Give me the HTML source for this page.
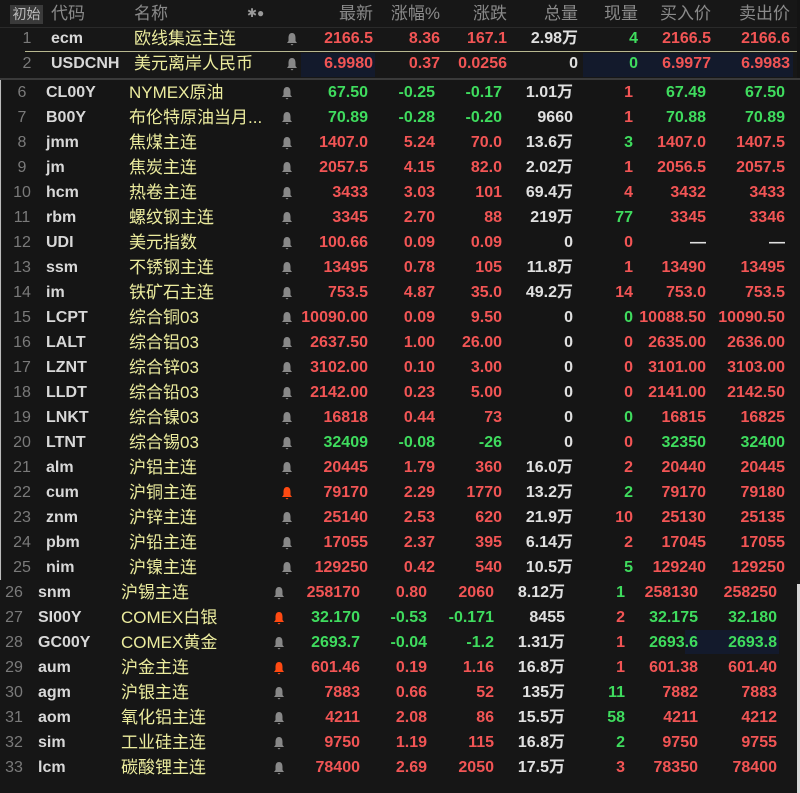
<!DOCTYPE html>
<html><head><meta charset="utf-8">
<style>
html,body{margin:0;padding:0;background:#1b1b1b;}
body{width:800px;height:793px;position:relative;overflow:hidden;font-family:"Liberation Sans","Noto Sans CJK SC",sans-serif;}
.sec{position:absolute;background:#161616;overflow:hidden;}
.r{position:absolute;left:0;width:800px;height:25px;line-height:25px;font-size:16px;font-weight:bold;white-space:nowrap;}
.r span{position:absolute;top:0;}
.r svg{position:absolute;}
.n{left:12px;width:30px;text-align:center;color:#7a7a7a;font-weight:normal;}
.c{left:51px;color:#d8d8d8;}
.m{left:134px;color:#ecec9e;font-weight:normal;font-size:17px;}
.b{left:286px;top:6px;width:12px;height:14px;}
.v1,.v2,.v3,.v4,.v5,.v6,.v7{width:90px;text-align:right;}
.v1{left:283px}.v2{left:350px}.v3{left:417px}.v4{left:488px;color:#e0e0e0}.v5{left:548px}.v6{left:621px}.v7{left:700px}
.R{color:#f25555}.G{color:#3fdc5e}.W{color:#e0e0e0}
.hd{position:absolute;top:0;left:0;width:800px;height:27px;line-height:27px;font-size:16px;color:#8a8a8a;}
.hd span{position:absolute;top:0;}
.hl{position:absolute;background:#131a2c;}
</style></head><body>
<svg width="0" height="0" style="position:absolute"><defs>
<symbol id="bell" viewBox="0 0 12 14"><path d="M6 1 C3 1 2.5 4 2.5 6 L2.5 9 L1 11 L11 11 L9.5 9 L9.5 6 C9.5 4 9 1 6 1 Z M4.5 12 L7.5 12 L6 13.5 Z"/></symbol></defs></svg>

<div class="sec" style="left:0;top:0;width:797px;height:78px;background:#171717;">
<div class="hd">
<span style="left:10px;top:5px;height:19px;line-height:19px;width:33px;background:#3a3a3a;color:#bbb;font-size:14px;text-align:center;">初始</span>
<span style="left:51px;font-size:17px">代码</span>
<span style="left:134px;font-size:17px">名称</span>
<span style="left:247px;font-size:12px;color:#999">✱●</span>
<span style="left:283px;width:90px;text-align:right;font-size:17px">最新</span>
<span style="left:350px;width:90px;text-align:right;font-size:17px">涨幅%</span>
<span style="left:417px;width:90px;text-align:right;font-size:17px">涨跌</span>
<span style="left:488px;width:90px;text-align:right;font-size:17px">总量</span>
<span style="left:548px;width:90px;text-align:right;font-size:17px">现量</span>
<span style="left:621px;width:90px;text-align:right;font-size:17px">买入价</span>
<span style="left:700px;width:90px;text-align:right;font-size:17px">卖出价</span>
</div>
<div style="position:absolute;left:0;top:27px;width:797px;height:1px;background:#2a2a2a"></div>
<div style="position:absolute;left:25px;top:51px;width:772px;height:1px;background:#b8b890"></div>
<div class="hl" style="left:301px;top:53px;width:74px;height:24px"></div>
<div class="hl" style="left:583px;top:53px;width:210px;height:24px"></div>
<div class="r" style="top:26px"><span class="n">1</span><span class="c">ecm</span><span class="m">欧线集运主连</span><svg class="b" fill="#888"><use href="#bell"/></svg><span class="v1 R">2166.5</span><span class="v2 R">8.36</span><span class="v3 R">167.1</span><span class="v4">2.98万</span><span class="v5 G">4</span><span class="v6 R">2166.5</span><span class="v7 R">2166.6</span></div>
<div class="r" style="top:51px"><span class="n">2</span><span class="c">USDCNH</span><span class="m">美元离岸人民币</span><svg class="b" fill="#888"><use href="#bell"/></svg><span class="v1 R">6.9980</span><span class="v2 R">0.37</span><span class="v3 R">0.0256</span><span class="v4">0</span><span class="v5 G">0</span><span class="v6 R">6.9977</span><span class="v7 R">6.9983</span></div>
</div>
<div style="position:absolute;left:797px;top:0;width:3px;height:78px;background:#141414"></div>
<div style="position:absolute;left:0;top:78px;width:800px;height:2px;background:#3a3a3a"></div>

<div class="sec" style="left:2px;top:80px;width:798px;height:500px;background:#151515;">
<div style="position:absolute;left:-7px;top:0;width:800px;height:500px;">
<div class="r" style="top:0px"><span class="n">6</span><span class="c">CL00Y</span><span class="m">NYMEX原油</span><svg class="b" fill="#888"><use href="#bell"/></svg><span class="v1 G">67.50</span><span class="v2 G">-0.25</span><span class="v3 G">-0.17</span><span class="v4">1.01万</span><span class="v5 R">1</span><span class="v6 G">67.49</span><span class="v7 G">67.50</span></div>
<div class="r" style="top:25px"><span class="n">7</span><span class="c">B00Y</span><span class="m">布伦特原油当月...</span><svg class="b" fill="#888"><use href="#bell"/></svg><span class="v1 G">70.89</span><span class="v2 G">-0.28</span><span class="v3 G">-0.20</span><span class="v4">9660</span><span class="v5 R">1</span><span class="v6 G">70.88</span><span class="v7 G">70.89</span></div>
<div class="r" style="top:50px"><span class="n">8</span><span class="c">jmm</span><span class="m">焦煤主连</span><svg class="b" fill="#888"><use href="#bell"/></svg><span class="v1 R">1407.0</span><span class="v2 R">5.24</span><span class="v3 R">70.0</span><span class="v4">13.6万</span><span class="v5 G">3</span><span class="v6 R">1407.0</span><span class="v7 R">1407.5</span></div>
<div class="r" style="top:75px"><span class="n">9</span><span class="c">jm</span><span class="m">焦炭主连</span><svg class="b" fill="#888"><use href="#bell"/></svg><span class="v1 R">2057.5</span><span class="v2 R">4.15</span><span class="v3 R">82.0</span><span class="v4">2.02万</span><span class="v5 R">1</span><span class="v6 R">2056.5</span><span class="v7 R">2057.5</span></div>
<div class="r" style="top:100px"><span class="n">10</span><span class="c">hcm</span><span class="m">热卷主连</span><svg class="b" fill="#888"><use href="#bell"/></svg><span class="v1 R">3433</span><span class="v2 R">3.03</span><span class="v3 R">101</span><span class="v4">69.4万</span><span class="v5 R">4</span><span class="v6 R">3432</span><span class="v7 R">3433</span></div>
<div class="r" style="top:125px"><span class="n">11</span><span class="c">rbm</span><span class="m">螺纹钢主连</span><svg class="b" fill="#888"><use href="#bell"/></svg><span class="v1 R">3345</span><span class="v2 R">2.70</span><span class="v3 R">88</span><span class="v4">219万</span><span class="v5 G">77</span><span class="v6 R">3345</span><span class="v7 R">3346</span></div>
<div class="r" style="top:150px"><span class="n">12</span><span class="c">UDI</span><span class="m">美元指数</span><svg class="b" fill="#888"><use href="#bell"/></svg><span class="v1 R">100.66</span><span class="v2 R">0.09</span><span class="v3 R">0.09</span><span class="v4">0</span><span class="v5 R">0</span><span class="v6 W">—</span><span class="v7 W">—</span></div>
<div class="r" style="top:175px"><span class="n">13</span><span class="c">ssm</span><span class="m">不锈钢主连</span><svg class="b" fill="#888"><use href="#bell"/></svg><span class="v1 R">13495</span><span class="v2 R">0.78</span><span class="v3 R">105</span><span class="v4">11.8万</span><span class="v5 R">1</span><span class="v6 R">13490</span><span class="v7 R">13495</span></div>
<div class="r" style="top:200px"><span class="n">14</span><span class="c">im</span><span class="m">铁矿石主连</span><svg class="b" fill="#888"><use href="#bell"/></svg><span class="v1 R">753.5</span><span class="v2 R">4.87</span><span class="v3 R">35.0</span><span class="v4">49.2万</span><span class="v5 R">14</span><span class="v6 R">753.0</span><span class="v7 R">753.5</span></div>
<div class="r" style="top:225px"><span class="n">15</span><span class="c">LCPT</span><span class="m">综合铜03</span><svg class="b" fill="#888"><use href="#bell"/></svg><span class="v1 R">10090.00</span><span class="v2 R">0.09</span><span class="v3 R">9.50</span><span class="v4">0</span><span class="v5 G">0</span><span class="v6 R">10088.50</span><span class="v7 R">10090.50</span></div>
<div class="r" style="top:250px"><span class="n">16</span><span class="c">LALT</span><span class="m">综合铝03</span><svg class="b" fill="#888"><use href="#bell"/></svg><span class="v1 R">2637.50</span><span class="v2 R">1.00</span><span class="v3 R">26.00</span><span class="v4">0</span><span class="v5 R">0</span><span class="v6 R">2635.00</span><span class="v7 R">2636.00</span></div>
<div class="r" style="top:275px"><span class="n">17</span><span class="c">LZNT</span><span class="m">综合锌03</span><svg class="b" fill="#888"><use href="#bell"/></svg><span class="v1 R">3102.00</span><span class="v2 R">0.10</span><span class="v3 R">3.00</span><span class="v4">0</span><span class="v5 R">0</span><span class="v6 R">3101.00</span><span class="v7 R">3103.00</span></div>
<div class="r" style="top:300px"><span class="n">18</span><span class="c">LLDT</span><span class="m">综合铅03</span><svg class="b" fill="#888"><use href="#bell"/></svg><span class="v1 R">2142.00</span><span class="v2 R">0.23</span><span class="v3 R">5.00</span><span class="v4">0</span><span class="v5 R">0</span><span class="v6 R">2141.00</span><span class="v7 R">2142.50</span></div>
<div class="r" style="top:325px"><span class="n">19</span><span class="c">LNKT</span><span class="m">综合镍03</span><svg class="b" fill="#888"><use href="#bell"/></svg><span class="v1 R">16818</span><span class="v2 R">0.44</span><span class="v3 R">73</span><span class="v4">0</span><span class="v5 G">0</span><span class="v6 R">16815</span><span class="v7 R">16825</span></div>
<div class="r" style="top:350px"><span class="n">20</span><span class="c">LTNT</span><span class="m">综合锡03</span><svg class="b" fill="#888"><use href="#bell"/></svg><span class="v1 G">32409</span><span class="v2 G">-0.08</span><span class="v3 G">-26</span><span class="v4">0</span><span class="v5 R">0</span><span class="v6 G">32350</span><span class="v7 G">32400</span></div>
<div class="r" style="top:375px"><span class="n">21</span><span class="c">alm</span><span class="m">沪铝主连</span><svg class="b" fill="#888"><use href="#bell"/></svg><span class="v1 R">20445</span><span class="v2 R">1.79</span><span class="v3 R">360</span><span class="v4">16.0万</span><span class="v5 R">2</span><span class="v6 R">20440</span><span class="v7 R">20445</span></div>
<div class="r" style="top:400px"><span class="n">22</span><span class="c">cum</span><span class="m">沪铜主连</span><svg class="b" fill="#ff4a12"><use href="#bell"/></svg><span class="v1 R">79170</span><span class="v2 R">2.29</span><span class="v3 R">1770</span><span class="v4">13.2万</span><span class="v5 G">2</span><span class="v6 R">79170</span><span class="v7 R">79180</span></div>
<div class="r" style="top:425px"><span class="n">23</span><span class="c">znm</span><span class="m">沪锌主连</span><svg class="b" fill="#888"><use href="#bell"/></svg><span class="v1 R">25140</span><span class="v2 R">2.53</span><span class="v3 R">620</span><span class="v4">21.9万</span><span class="v5 R">10</span><span class="v6 R">25130</span><span class="v7 R">25135</span></div>
<div class="r" style="top:450px"><span class="n">24</span><span class="c">pbm</span><span class="m">沪铅主连</span><svg class="b" fill="#888"><use href="#bell"/></svg><span class="v1 R">17055</span><span class="v2 R">2.37</span><span class="v3 R">395</span><span class="v4">6.14万</span><span class="v5 R">2</span><span class="v6 R">17045</span><span class="v7 R">17055</span></div>
<div class="r" style="top:475px"><span class="n">25</span><span class="c">nim</span><span class="m">沪镍主连</span><svg class="b" fill="#888"><use href="#bell"/></svg><span class="v1 R">129250</span><span class="v2 R">0.42</span><span class="v3 R">540</span><span class="v4">10.5万</span><span class="v5 G">5</span><span class="v6 R">129240</span><span class="v7 R">129250</span></div>
</div>
</div>
<div style="position:absolute;left:0;top:80px;width:1px;height:500px;background:#bbb"></div>

<div class="sec" style="left:0;top:580px;width:797px;height:213px;background:#161616;">
<div style="position:absolute;left:-13px;top:0;width:800px;height:213px;">
<div class="hl" style="left:698px;top:50px;width:94px;height:24px"></div>
<div class="r" style="top:0px"><span class="n">26</span><span class="c">snm</span><span class="m">沪锡主连</span><svg class="b" fill="#888"><use href="#bell"/></svg><span class="v1 R">258170</span><span class="v2 R">0.80</span><span class="v3 R">2060</span><span class="v4">8.12万</span><span class="v5 G">1</span><span class="v6 R">258130</span><span class="v7 R">258250</span></div>
<div class="r" style="top:25px"><span class="n">27</span><span class="c">SI00Y</span><span class="m">COMEX白银</span><svg class="b" fill="#ff4a12"><use href="#bell"/></svg><span class="v1 G">32.170</span><span class="v2 G">-0.53</span><span class="v3 G">-0.171</span><span class="v4">8455</span><span class="v5 R">2</span><span class="v6 G">32.175</span><span class="v7 G">32.180</span></div>
<div class="r" style="top:50px"><span class="n">28</span><span class="c">GC00Y</span><span class="m">COMEX黄金</span><svg class="b" fill="#888"><use href="#bell"/></svg><span class="v1 G">2693.7</span><span class="v2 G">-0.04</span><span class="v3 G">-1.2</span><span class="v4">1.31万</span><span class="v5 R">1</span><span class="v6 G">2693.6</span><span class="v7 G">2693.8</span></div>
<div class="r" style="top:75px"><span class="n">29</span><span class="c">aum</span><span class="m">沪金主连</span><svg class="b" fill="#ff4a12"><use href="#bell"/></svg><span class="v1 R">601.46</span><span class="v2 R">0.19</span><span class="v3 R">1.16</span><span class="v4">16.8万</span><span class="v5 R">1</span><span class="v6 R">601.38</span><span class="v7 R">601.40</span></div>
<div class="r" style="top:100px"><span class="n">30</span><span class="c">agm</span><span class="m">沪银主连</span><svg class="b" fill="#888"><use href="#bell"/></svg><span class="v1 R">7883</span><span class="v2 R">0.66</span><span class="v3 R">52</span><span class="v4">135万</span><span class="v5 G">11</span><span class="v6 R">7882</span><span class="v7 R">7883</span></div>
<div class="r" style="top:125px"><span class="n">31</span><span class="c">aom</span><span class="m">氧化铝主连</span><svg class="b" fill="#888"><use href="#bell"/></svg><span class="v1 R">4211</span><span class="v2 R">2.08</span><span class="v3 R">86</span><span class="v4">15.5万</span><span class="v5 G">58</span><span class="v6 R">4211</span><span class="v7 R">4212</span></div>
<div class="r" style="top:150px"><span class="n">32</span><span class="c">sim</span><span class="m">工业硅主连</span><svg class="b" fill="#888"><use href="#bell"/></svg><span class="v1 R">9750</span><span class="v2 R">1.19</span><span class="v3 R">115</span><span class="v4">16.8万</span><span class="v5 G">2</span><span class="v6 R">9750</span><span class="v7 R">9755</span></div>
<div class="r" style="top:175px"><span class="n">33</span><span class="c">lcm</span><span class="m">碳酸锂主连</span><svg class="b" fill="#888"><use href="#bell"/></svg><span class="v1 R">78400</span><span class="v2 R">2.69</span><span class="v3 R">2050</span><span class="v4">17.5万</span><span class="v5 R">3</span><span class="v6 R">78350</span><span class="v7 R">78400</span></div>
</div>
</div>
<div style="position:absolute;left:797px;top:584px;width:3px;height:209px;background:#d8d8d8"></div>
</body></html>
